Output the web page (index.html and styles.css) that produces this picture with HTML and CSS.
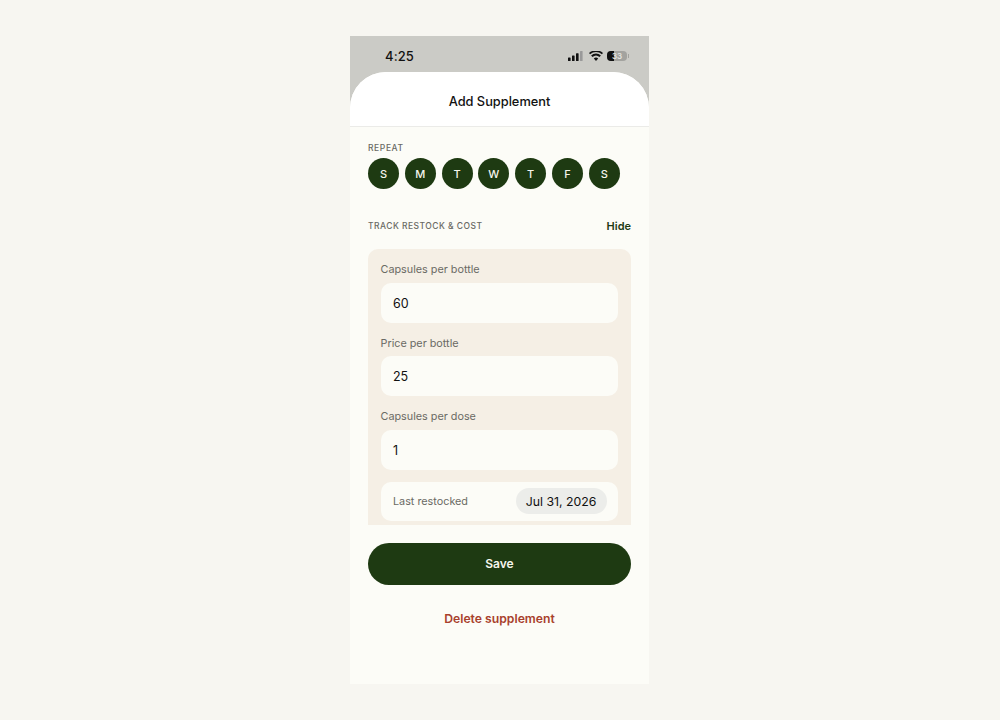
FILE: index.html
```html
<!DOCTYPE html>
<html lang="en">
<head>
<meta charset="utf-8">
<title>Add Supplement</title>
<link rel="stylesheet" href="styles.css">
</head>
<body>
<main class="phone">
  <div class="status">
    <span class="time">4:25</span>
    <div class="status-icons">
      <svg class="signal" width="15" height="10" viewBox="0 0 15 10"><rect x="0" y="6.5" width="2.6" height="3.5" rx=".6" fill="#111"/><rect x="4" y="4.5" width="2.6" height="5.5" rx=".6" fill="#111"/><rect x="8" y="2.2" width="2.6" height="7.8" rx=".6" fill="#111"/><rect x="12" y="0" width="2.6" height="10" rx=".6" fill="#999"/></svg>
      <svg class="wifi" width="14" height="10" viewBox="0 0 14 10"><path d="M7 10 4.8 7.4a3.3 3.3 0 0 1 4.4 0zM3.5 6 2.1 4.4a7.3 7.3 0 0 1 9.8 0L10.5 6a5.2 5.2 0 0 0-7 0zM1.1 3.3 0 2a10.5 10.5 0 0 1 14 0l-1.1 1.3a8.8 8.8 0 0 0-11.8 0z" fill="#111"/></svg>
      <div class="battery"><div class="battery-fill"></div><span class="battery-text">33</span></div>
      <div class="battery-cap"></div>
    </div>
  </div>
  <div class="sheet">
    <header class="sheet-head"><h1 class="sheet-title">Add Supplement</h1></header>
    <div class="content">
      <div class="label repeat-label">REPEAT</div>
      <div class="days">
        <span class="day">S</span><span class="day">M</span><span class="day">T</span><span class="day">W</span><span class="day">T</span><span class="day">F</span><span class="day">S</span>
      </div>
      <div class="track-row">
        <span class="label">TRACK RESTOCK &amp; COST</span>
        <span class="hide">Hide</span>
      </div>
      <section class="panel">
        <div class="field-label">Capsules per bottle</div>
        <div class="input">60</div>
        <div class="field-label">Price per bottle</div>
        <div class="input">25</div>
        <div class="field-label">Capsules per dose</div>
        <div class="input">1</div>
        <div class="date-row">
          <span class="date-label">Last restocked</span>
          <span class="date-pill">Jul 31, 2026</span>
        </div>
      </section>
      <button class="save">Save</button>
      <div class="delete">Delete supplement</div>
    </div>
  </div>
</main>
</body>
</html>
```
FILE: styles.css
```css
* { box-sizing: border-box; }
html, body { margin: 0; height: 100%; }
body {
  background: #f7f6f1;
  font-family: Inter, "Liberation Sans", sans-serif;
  padding-top: 36px;
  height: 720px;
  overflow: hidden;
}
.phone {
  width: 299px;
  height: 648px;
  margin-left: 350px;
  background: #cbcbc6;
  display: flex;
  flex-direction: column;
}
.status {
  height: 36px;
  flex: none;
  display: flex;
  align-items: center;
  justify-content: space-between;
  padding: 3px 20px 0 35px;
}
.time { font-size: 13px; font-weight: 500; color: #111; letter-spacing: .1px; }
.status-icons { display: flex; align-items: center; }
.signal { margin-right: 5px; margin-left: 1px; }
.wifi { margin-right: 4px; margin-left: 1px; }
.battery {
  width: 20px; height: 10px; border-radius: 4px;
  background: #a3a39f; position: relative; overflow: hidden;
}
.battery-fill { width: 7px; height: 100%; background: #111; }
.battery-text {
  position: absolute; left: 0; right: 0; top: 0;
  text-align: center; font-size: 8px; line-height: 10px; font-weight: 600; color: #e4e4e0;
}
.battery-cap { width: 1px; height: 4px; background: #a3a39f; margin-left: 1px; }
.sheet {
  flex: 1;
  background: #fcfcf7;
  border-radius: 36px 36px 0 0;
  overflow: hidden;
  display: flex;
  flex-direction: column;
}
.sheet-head {
  height: 55px;
  padding-top: 4px;
  background: #fff;
  border-bottom: 1px solid #ebebe8;
  display: flex; align-items: center; justify-content: center;
  flex: none;
}
.sheet-title { margin: 0; font-size: 12.8px; font-weight: 500; color: #111; }
.content { padding: 0 18px; display: flex; flex-direction: column; }
.label { font-size: 8.5px; font-weight: 500; color: #6a6a64; letter-spacing: .47px; }
.repeat-label { margin-top: 16px; line-height: 10px; letter-spacing: .6px; }
.days { display: flex; gap: 5.8px; margin-top: 5px; }
.day {
  width: 31px; height: 31px; border-radius: 50%;
  background: #1e3a12; color: #f5f5ec;
  display: flex; align-items: center; justify-content: center;
  font-size: 11px; font-weight: 500;
}
.track-row { display: flex; justify-content: space-between; align-items: center; margin-top: 27px; height: 20px; }
.hide { font-size: 11px; font-weight: 600; color: #1e3a12; }
.panel {
  margin-top: 13px;
  height: 275.5px;
  background: #f5efe5;
  border-radius: 10px 10px 0 0;
  padding: 14px 13px 0 12.5px;
  overflow: hidden;
}
.field-label { font-size: 10.8px; color: #6a6a64; line-height: 13px; margin-bottom: 6.5px; }
.input {
  height: 40px; background: #fcfcf7; border-radius: 10px;
  padding: 1px 12.5px 0; display: flex; align-items: center;
  font-size: 12.5px; color: #111; margin-bottom: 14px;
}
.date-row {
  height: 39px; background: #fcfcf7; border-radius: 10px; margin-top: -2px;
  padding: 0 11.5px 0 12.5px; display: flex; align-items: center; justify-content: space-between;
}
.date-label { font-size: 10.8px; color: #6a6a64; }
.date-pill {
  height: 26px; padding: 0 10px; border-radius: 13px; background: #ecedea;
  display: flex; align-items: center; font-size: 12.3px; color: #111;
}
.save {
  margin-top: 18px; height: 42px; border: 0; border-radius: 21px;
  background: #1e3a12; color: #f5f5ec; font: 600 12px Inter, sans-serif;
}
.delete { margin-top: 26px; text-align: center; font-size: 12.2px; font-weight: 600; color: #a8402c; }
```
